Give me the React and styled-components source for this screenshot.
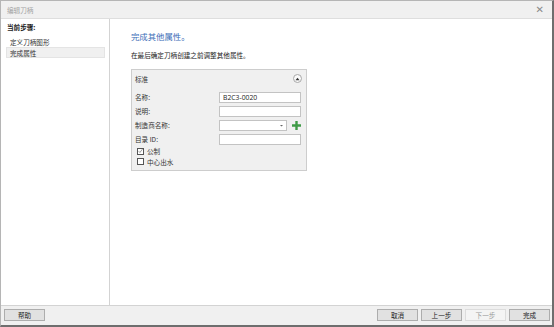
import React from "react";
import styled, { createGlobalStyle } from "styled-components";

const Global = createGlobalStyle`
  html, body { margin: 0; padding: 0; width: 554px; height: 327px; overflow: hidden; background: #fff; }
  * { box-sizing: border-box; }
  body { font-family: "Noto Sans CJK SC", "Noto Sans", sans-serif; font-size: 6.6px; color: #333; }
`;

const Window = styled.div`
  width: 554px;
  height: 327px;
  display: flex;
  flex-direction: column;
  border-top: 1px solid #b5b5b5;
  border-left: 1px solid #b5b5b5;
  border-right: 2px solid #6e6e6e;
  border-bottom: 2px solid #6e6e6e;
  background: #fff;
`;

const TitleBar = styled.div`
  height: 18px;
  flex: none;
  background: #f0f0f0;
  border-bottom: 1px solid #dedede;
  display: flex;
  align-items: center;
  justify-content: space-between;
  padding: 0 8px 0 6px;
  color: #a3a3a3;
`;

const Close = styled.span`
  font-size: 10px;
  color: #8a8a8a;
  line-height: 1;
  font-family: "DejaVu Sans", sans-serif;
`;

const Main = styled.div`
  flex: 1;
  display: flex;
  min-height: 0;
`;

const Sidebar = styled.div`
  width: 109px;
  flex: none;
  border-right: 1px solid #d3d3d3;
  padding: 4px 4px 0 5px;
`;

const StepTitle = styled.div`
  font-weight: bold;
  color: #222;
  line-height: 9px;
  padding-left: 1px;
  margin-bottom: 4px;
`;

const Step = styled.div`
  height: 11px;
  line-height: 10px;
  padding-left: 3px;
  border: 1px solid ${(p) => (p.$active ? "#e4e4e4" : "transparent")};
  background: ${(p) => (p.$active ? "#f0f0f0" : "transparent")};
  color: #333;
`;

const Content = styled.div`
  flex: 1;
  padding: 12px 0 0 21px;
`;

const Heading = styled.div`
  font-size: 8.4px;
  line-height: 10px;
  color: #3d6db7;
`;

const Desc = styled.div`
  margin-top: 10px;
  line-height: 9px;
  color: #222;
`;

const Panel = styled.div`
  margin-top: 9px;
  width: 176px;
  border: 1px solid #cdcdcd;
  background: #f0f0f0;
  padding: 0 5px 3px 3px;
`;

const PanelHeader = styled.div`
  height: 17px;
  display: flex;
  align-items: center;
  justify-content: space-between;
  margin-bottom: 3px;
`;

const CollapseBtn = styled.span`
  width: 9px;
  height: 9px;
  border-radius: 50%;
  border: 1px solid #a8a8a8;
  background: #fafafa;
  display: flex;
  align-items: center;
  justify-content: center;
  margin-right: -1px;
`;

const Row = styled.div`
  height: 14px;
  display: grid;
  grid-template-columns: 84px 82px;
  align-items: center;
`;

const Label = styled.span``;

const Input = styled.div`
  height: 11px;
  border: 1px solid #c3c3c3;
  background: #fff;
  font-size: 6.8px;
  line-height: 9px;
  padding-left: 3px;
  color: #222;
  font-family: "Open Sans", "Noto Sans", sans-serif;
`;

const ComboWrap = styled.div`
  display: flex;
  align-items: center;
`;

const Combo = styled(Input)`
  width: 68px;
  display: flex;
  justify-content: flex-end;
  align-items: center;
  padding-right: 3px;
`;

const Plus = styled.svg`
  margin-left: 5px;
`;

const CheckRow = styled.label`
  height: 10.5px;
  display: flex;
  align-items: center;
  gap: 3px;
  padding-left: 2px;
`;

const Box = styled.span`
  width: 7px;
  height: 7px;
  border: 1px solid #555;
  background: #fff;
  display: flex;
  align-items: center;
  justify-content: center;
`;

const Footer = styled.div`
  height: 20px;
  flex: none;
  background: #f0f0f0;
  border-top: 1px solid #d3d3d3;
  display: flex;
  align-items: center;
  justify-content: space-between;
  padding: 0 2px 1px 3px;
`;

const BtnGroup = styled.div`
  display: flex;
  gap: 3px;
`;

const Button = styled.div`
  width: 41px;
  height: 12px;
  border: 1px solid ${(p) => (p.$disabled ? "#dcdcdc" : "#adadad")};
  background: ${(p) => (p.$disabled ? "#f4f4f4" : "#e1e1e1")};
  color: ${(p) => (p.$disabled ? "#9a9a9a" : "#222")};
  display: flex;
  align-items: center;
  justify-content: center;
  line-height: 1;
`;

export default function App() {
  return (
    <>
      <Global />
      <Window>
        <TitleBar>
          <span>编辑刀柄</span>
          <Close>✕</Close>
        </TitleBar>
        <Main>
          <Sidebar>
            <StepTitle>当前步骤:</StepTitle>
            <Step>定义刀柄图形</Step>
            <Step $active>完成属性</Step>
          </Sidebar>
          <Content>
            <Heading>完成其他属性。</Heading>
            <Desc>在最后确定刀柄创建之前调整其他属性。</Desc>
            <Panel>
              <PanelHeader>
                <span>标准</span>
                <CollapseBtn>
                  <svg width="5" height="4" viewBox="0 0 5 4">
                    <path d="M0.5 3.2 L2.5 0.8 L4.5 3.2 Z" fill="#333" />
                  </svg>
                </CollapseBtn>
              </PanelHeader>
              <Row>
                <Label>名称:</Label>
                <Input>B2C3-0020</Input>
              </Row>
              <Row>
                <Label>说明:</Label>
                <Input />
              </Row>
              <Row>
                <Label>制造商名称:</Label>
                <ComboWrap>
                  <Combo>
                    <svg width="3" height="3" viewBox="0 0 3 3">
                      <path d="M0 1 L3 1 L1.5 2.5 Z" fill="#666" />
                    </svg>
                  </Combo>
                  <Plus width="9" height="9" viewBox="0 0 9 9">
                    <path d="M3.3 0 H5.7 V3.3 H9 V5.7 H5.7 V9 H3.3 V5.7 H0 V3.3 H3.3 Z" fill="#3f9b47" />
                  </Plus>
                </ComboWrap>
              </Row>
              <Row>
                <Label>目录 ID:</Label>
                <Input />
              </Row>
              <CheckRow>
                <Box>
                  <svg width="6" height="6" viewBox="0 0 6 6">
                    <path d="M0.8 3.2 L2.3 4.8 L5.3 0.8" stroke="#555" strokeWidth="0.7" fill="none" />
                  </svg>
                </Box>
                <span>公制</span>
              </CheckRow>
              <CheckRow>
                <Box />
                <span>中心出水</span>
              </CheckRow>
            </Panel>
          </Content>
        </Main>
        <Footer>
          <Button>帮助</Button>
          <BtnGroup>
            <Button>取消</Button>
            <Button>上一步</Button>
            <Button $disabled>下一步</Button>
            <Button>完成</Button>
          </BtnGroup>
        </Footer>
      </Window>
    </>
  );
}
